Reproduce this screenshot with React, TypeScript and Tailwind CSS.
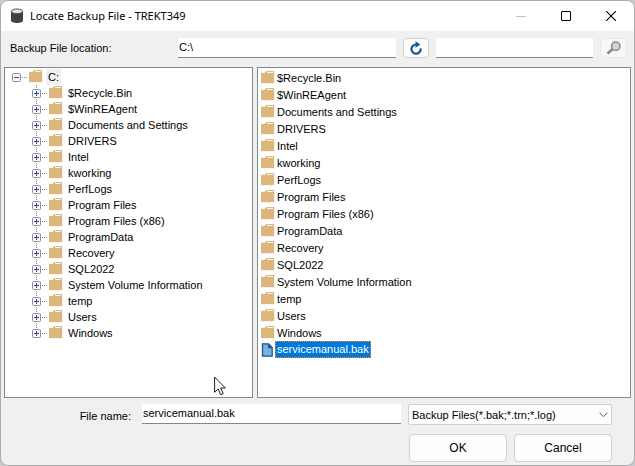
import { useState } from "react";

const FOLDERS = [
  "$Recycle.Bin",
  "$WinREAgent",
  "Documents and Settings",
  "DRIVERS",
  "Intel",
  "kworking",
  "PerfLogs",
  "Program Files",
  "Program Files (x86)",
  "ProgramData",
  "Recovery",
  "SQL2022",
  "System Volume Information",
  "temp",
  "Users",
  "Windows",
];

function FolderIcon() {
  return (
    <svg width="14" height="14" viewBox="0 0 14 14" className="shrink-0" aria-hidden="true" shapeRendering="crispEdges">
      <path d="M0 1H4L5 0H14V13H0Z" fill="#f4f4f2" />
      <path d="M0 2H4L5 0H13V12H0Z" fill="#dcb67a" />
      <path d="M6 1H12V2H6Z" fill="#f8f5ee" />
    </svg>
  );
}

function FileIcon() {
  return (
    <svg width="14" height="14" viewBox="0 0 14 14" className="shrink-0" aria-hidden="true">
      <path d="M1.5 .8H7.5L11.2 4.5V13.2H1.5Z" fill="#75b2e4" stroke="#175a8c" strokeWidth="1.3" />
      <path d="M7 .5L11.8 5.3H7Z" fill="#175a8c" />
    </svg>
  );
}

function Expander({ open = false }: { open?: boolean }) {
  return (
    <button type="button" aria-label={open ? "Collapse" : "Expand"} className="relative block size-[9px] shrink-0">
      <svg width="9" height="9" viewBox="0 0 9 9" aria-hidden="true">
        <rect x=".5" y=".5" width="8" height="8" rx="1" fill="#f8f8f8" stroke="#919191" />
        <path d={open ? "M2 4.5H7" : "M2 4.5H7M4.5 2V7"} stroke="#2f50a8" />
      </svg>
    </button>
  );
}

function Dots() {
  return (
    <svg width="8" height="1" viewBox="0 0 8 1" className="shrink-0" aria-hidden="true">
      <path d="M1 .5H7" stroke="#8a8a8a" strokeDasharray="1 1" />
    </svg>
  );
}

function TreeRow({ name, last }: { name: string; last: boolean }) {
  return (
    <li className="relative flex h-4 items-center pl-[26px]">
      <svg width="1" height="16" viewBox="0 0 1 16" className="absolute top-0 left-[30px]" aria-hidden="true">
        <path d={last ? "M.5 0V8" : "M.5 0V16"} stroke="#8a8a8a" strokeDasharray="1 1" />
      </svg>
      <Expander />
      <Dots />
      <FolderIcon />
      <span className="pl-[5px] whitespace-nowrap">{name}</span>
    </li>
  );
}

const field = "h-5 min-w-0 border-b border-[#868686] bg-white px-px pb-px outline-none";
const pushButton = "h-7 w-[98px] rounded border border-[#d0d0d0] bg-[#fdfdfd] text-[12px]";

export default function App() {
  const [path, setPath] = useState("C:\\");
  const [search, setSearch] = useState("");
  const [file, setFile] = useState("servicemanual.bak");

  return (
    <div className="min-h-screen bg-[#c9cacd]">
      <main className="flex min-h-screen flex-col overflow-hidden rounded-lg border border-[#acacac] bg-[#f0f0f0] font-['Liberation_Sans',Arial,sans-serif] text-[11px] leading-4 text-black">
        <header className="flex h-[30px] shrink-0 items-center bg-white pr-px pl-[9px]">
          <svg width="14" height="16" viewBox="0 0 14 16" aria-hidden="true">
            <path d="M1 3V12.5C1 15.8 13 15.8 13 12.5V3Z" fill="#414141" />
            <ellipse cx="7" cy="3.3" rx="5.6" ry="2.3" fill="#e4e4e4" stroke="#555" />
          </svg>
          <h1 className="flex-1 pl-[6px] font-['Noto_Sans','Open_Sans',sans-serif] text-[11px]">Locate Backup File - TREKT349</h1>
          <div className="flex">
            <button type="button" aria-label="Minimize" disabled className="grid h-[30px] w-[45px] place-items-center">
              <svg width="10" height="10" viewBox="0 0 10 10"><path d="M0 5.5H10" stroke="#c2c2c2" /></svg>
            </button>
            <button type="button" aria-label="Maximize" className="grid h-[30px] w-[45px] place-items-center">
              <svg width="10" height="10" viewBox="0 0 10 10"><rect x=".5" y=".5" width="9" height="9" rx=".5" fill="none" stroke="#000" /></svg>
            </button>
            <button type="button" aria-label="Close" className="grid h-[30px] w-[45px] place-items-center">
              <svg width="10" height="10" viewBox="0 0 10 10"><path d="M0 0L10 10M10 0L0 10" stroke="#000" strokeWidth="1.1" /></svg>
            </button>
          </div>
        </header>

        <div className="flex h-9 shrink-0 items-center pr-[7px] pb-[3px] pl-[9px]">
          <label htmlFor="location" className="w-[168px] shrink-0">Backup File location:</label>
          <input id="location" value={path} onChange={(e) => setPath(e.target.value)} className={`${field} flex-[218_1_0%]`} />
          <button type="button" aria-label="Refresh" className="mx-[7px] grid h-5 w-[26px] shrink-0 place-items-center rounded border border-[#d0d0d0] bg-[#fdfdfd]">
            <svg width="14" height="14" viewBox="0 0 14 14" aria-hidden="true">
              <path d="M7.4 3.5A4.6 4.6 0 1 0 11.6 7.4" fill="none" stroke="#0c5a9e" strokeWidth="2.2" />
              <path d="M6.5 .3L11.4 3.5L6.5 6.7Z" fill="#0c5a9e" />
            </svg>
          </button>
          <input aria-label="Search" value={search} onChange={(e) => setSearch(e.target.value)} className={`${field} flex-[157_1_0%]`} />
          <button type="button" aria-label="Find" disabled className="ml-[7px] grid h-5 w-[27px] shrink-0 place-items-center rounded border border-[#e8e8e8] bg-[#f7f7f7]">
            <svg width="16" height="14" viewBox="0 0 16 14" aria-hidden="true">
              <path d="M6.8 8L1.5 12.5" stroke="#858585" strokeWidth="2.6" />
              <circle cx="9.8" cy="5.2" r="4.2" fill="#d4d4d4" stroke="#8d8d8d" strokeWidth="1.5" />
            </svg>
          </button>
        </div>

        <div className="flex flex-1 gap-1 px-[3px]">
          <section aria-label="Folders" className="relative w-[249px] shrink-0 border border-[#828790] bg-white pt-px pl-px">
            <ul>
              <li>
                <div className="flex h-4 items-center pl-[6px]">
                  <Expander open />
                  <Dots />
                  <FolderIcon />
                  <span className="ml-[3px] bg-[#f0f0f0] px-[2px]">C:</span>
                </div>
                <ul>
                  {FOLDERS.map((name, i) => (
                    <TreeRow key={name} name={name} last={i === FOLDERS.length - 1} />
                  ))}
                </ul>
              </li>
            </ul>
            <svg width="13" height="20" viewBox="0 0 13 20" className="absolute bottom-px left-[209px]" aria-hidden="true">
              <path d="M.6 1V16.3L4.2 13L6.7 18.7L9.2 17.6L6.7 12H11.4Z" fill="#fff" stroke="#1c1c28" />
            </svg>
          </section>
          <section aria-label="Files" className="min-w-0 flex-1 border border-[#828790] bg-white pt-px pl-[3px]">
            <ul>
              {FOLDERS.map((name) => (
                <li key={name} className="flex h-[17px] items-center">
                  <FolderIcon />
                  <span className="pl-[2px]">{name}</span>
                </li>
              ))}
              <li className="flex h-[17px] items-center">
                <FileIcon />
                <button type="button" className="h-[17px] border border-dotted border-[#ff8728] bg-[#0078d7] px-px leading-[15px] text-white">servicemanual.bak</button>
              </li>
            </ul>
          </section>
        </div>

        <footer className="flex shrink-0 flex-col gap-1.5 pt-[6px] pr-[22px] pb-[3px]">
          <div className="flex items-start">
            <label htmlFor="file" className="w-[141px] shrink-0 pr-[11px] text-right leading-6">File name:</label>
            <input id="file" value={file} onChange={(e) => setFile(e.target.value)} className={`${field} flex-1`} />
            <div className="relative ml-[7px] w-[204px] shrink-0">
              <select aria-label="File type" className="block h-[21px] w-full appearance-none rounded-xs border border-[#d0d0d0] bg-[#fdfdfd] pl-[3px] outline-none">
                <option>Backup Files(*.bak;*.trn;*.log)</option>
              </select>
              <svg width="9" height="6" viewBox="0 0 9 6" className="pointer-events-none absolute top-2 right-1" aria-hidden="true">
                <path d="M.5 .7L4.5 4.7L8.5 .7" fill="none" stroke="#666" />
              </svg>
            </div>
          </div>
          <div className="flex justify-end gap-[7px]">
            <button type="button" className={pushButton}>OK</button>
            <button type="button" className={pushButton}>Cancel</button>
          </div>
        </footer>
      </main>
    </div>
  );
}
